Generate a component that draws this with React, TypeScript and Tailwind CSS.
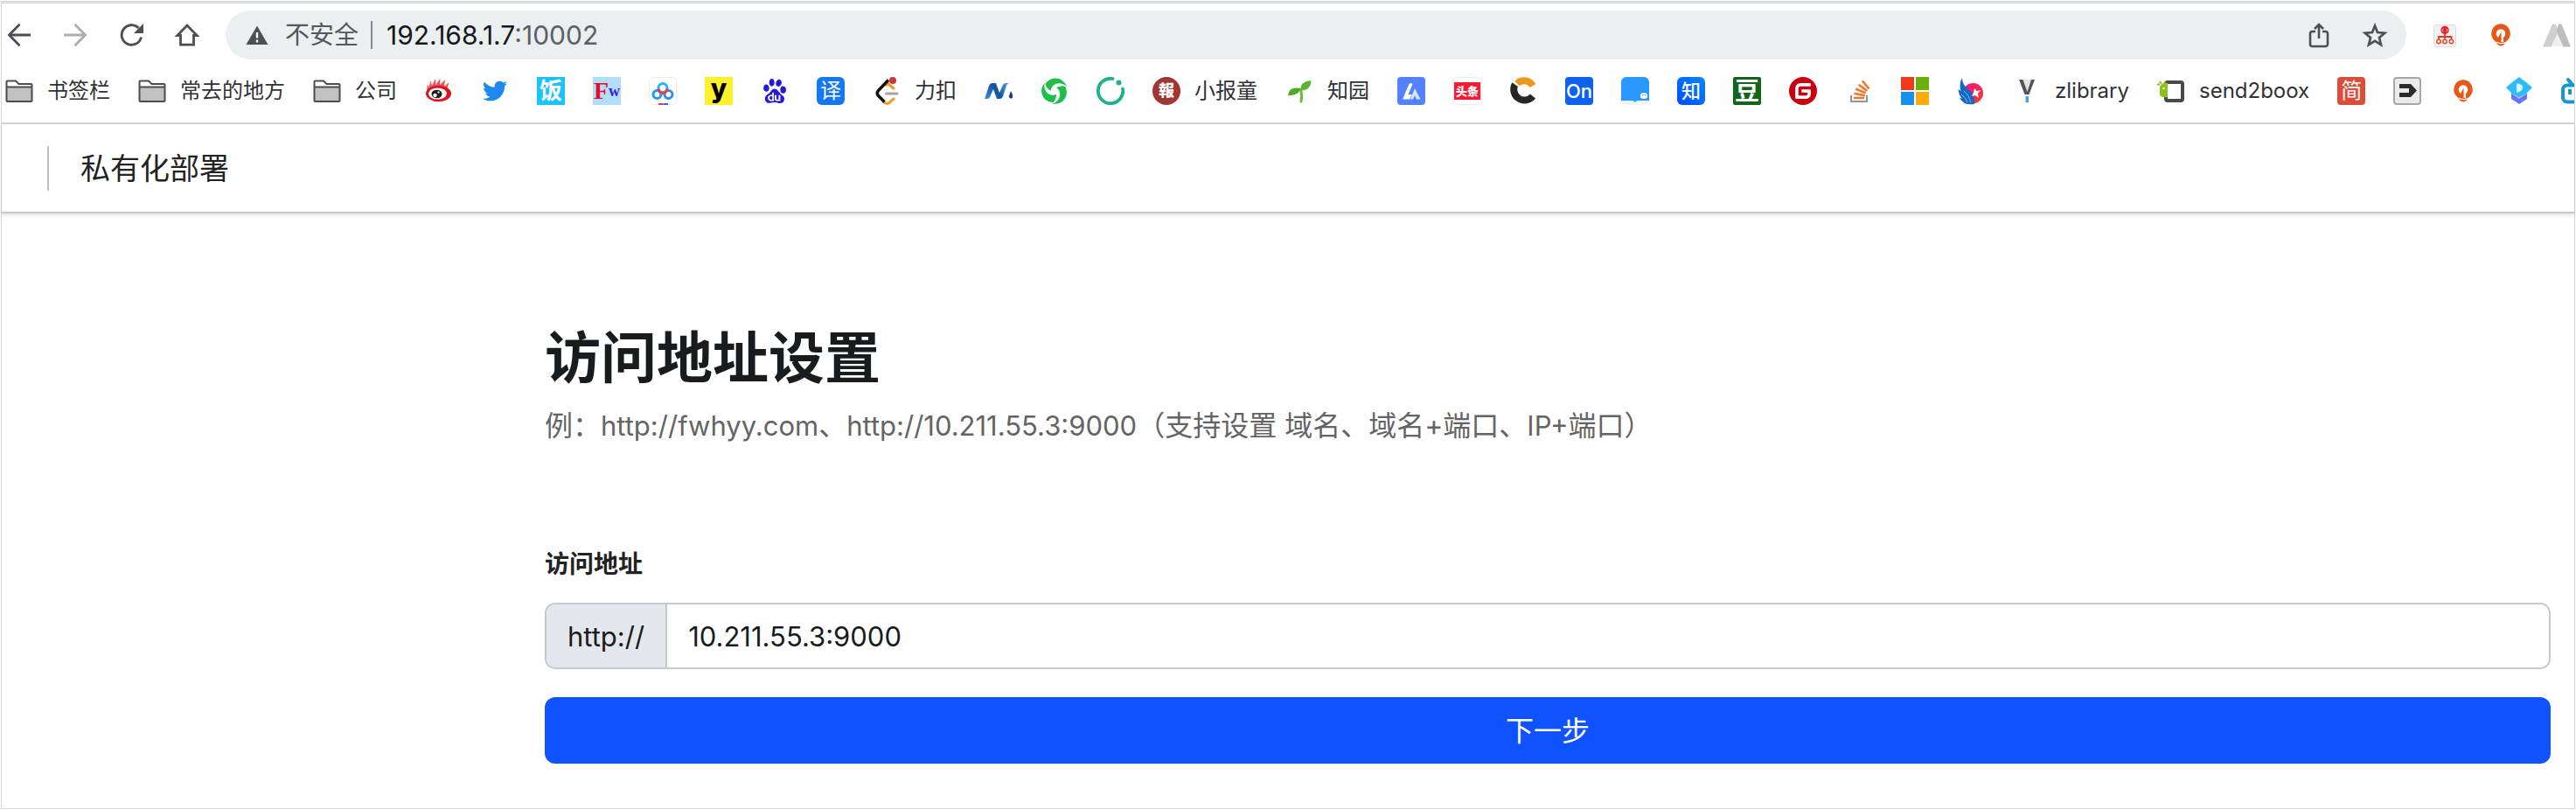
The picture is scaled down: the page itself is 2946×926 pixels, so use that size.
import type { ReactNode } from "react";
import { FaTwitter } from "react-icons/fa";
import { SiBaidu, SiGitee } from "react-icons/si";

function Svg({ children }: { children: ReactNode }) {
  return (
    <svg viewBox="0 0 32 32" className="size-8 shrink-0" fill="none" aria-hidden="true">
      {children}
    </svg>
  );
}

function Tile({ className, children }: { className: string; children: ReactNode }) {
  return (
    <span className={"flex size-8 shrink-0 items-center justify-center whitespace-nowrap leading-8 " + className}>
      {children}
    </span>
  );
}

const Folder = () => (
  <Svg>
    <path d="M1.5 27V5.500a1 1 0 0 1 1-1h9.500l3.500 3.500h14a1 1 0 0 1 1 1v18a1 1 0 0 1-1 1h-27a1 1 0 0 1-1-1z" fill="#fff" />
    <path d="M1.5 12h29v15a1 1 0 0 1-1 1h-27a1 1 0 0 1-1-1z" fill="#c2c2c2" />
    <path d="M1.5 11.500h29M1.500 27V5.500a1 1 0 0 1 1-1h9.500l3.500 3.500h14a1 1 0 0 1 1 1v18a1 1 0 0 1-1 1h-27a1 1 0 0 1-1-1z" stroke="#4a4c4f" strokeWidth="2" />
  </Svg>
);

const Weibo = () => (
  <Svg>
    <path d="M2 16 3 8l1.500 4L6.500 4l1.500 6 4-8 .5 7L17.500 1.500 17 9l6-6-1 8 5.500-5-2 7 3.500 4z" fill="#f1505a" />
    <ellipse cx="15.500" cy="19" rx="14.500" ry="9.200" fill="#e0101f" />
    <ellipse cx="14.500" cy="19" rx="10.500" ry="6.600" fill="#fff" />
    <ellipse cx="13.500" cy="19.500" rx="6" ry="4.800" fill="#1d1d1d" />
    <circle cx="11.500" cy="21" r="2.200" fill="#fff" />
    <circle cx="15.500" cy="17.500" r="1.200" fill="#ddd" />
  </Svg>
);

const NetDisk = () => (
  <Svg>
    <rect x=".5" y=".5" width="31" height="31" rx="5" fill="#fff" stroke="#ececec" />
    <circle cx="9.500" cy="20" r="4.500" stroke="#1e9bf0" strokeWidth="3" />
    <circle cx="22.500" cy="20" r="4.500" stroke="#2f8df5" strokeWidth="3" />
    <circle cx="16" cy="12.500" r="5" stroke="#25b5f5" strokeWidth="3" />
    <path d="M11 13.500a5 5 0 0 0 10 0" stroke="#ee3a53" strokeWidth="3" />
    <path d="M11 31h5.500" stroke="#f0364c" strokeWidth="2" />
    <path d="M16.500 31H22" stroke="#1f72f2" strokeWidth="2" />
  </Svg>
);

const LeetCode = () => (
  <Svg>
    <path d="m15.500 9 2-1.500L24 13M12.500 28.500q4 4 7.500 0l4-3.500" stroke="#f09a25" strokeWidth="3" strokeLinecap="round" />
    <path d="M18 3.500 6.500 15.500q-2.500 3 0 6l7 7" stroke="#111" strokeWidth="3.400" />
    <path d="M15.500 19H28" stroke="#aaa5a3" strokeWidth="3" strokeLinecap="round" />
    <circle cx="23" cy="4" r="4" fill="#c8393c" />
  </Svg>
);

const Wave = () => (
  <Svg>
    <defs>
      <linearGradient id="wave" x1="0" y1="24" x2="28" y2="7" gradientUnits="userSpaceOnUse">
        <stop stopColor="#3f8ce8" />
        <stop offset=".5" stopColor="#12539c" />
        <stop offset="1" stopColor="#5aa7f5" />
      </linearGradient>
    </defs>
    <path d="M0 25 5 10q1-3 4-3h4l4 11 4-9q1-2 3-2h4q-2 1-3 3l-4 12q-1 3-3 3h-4L10 14 6 23q-1 2-3 2z" fill="url(#wave)" />
    <path d="M30 16q4 7 1 8.500-3.500.5-3-3z" fill="#123f80" />
  </Svg>
);

const Swirl = () => (
  <Svg>
    <g fill="#1fbe4b">
      <path d="M5.500 8C11-1 25-1.500 30 11 23 4.500 13 7 11.500 16 8.500 13.500 6 11.500 5.500 8z" />
      <path d="M5.500 8C11-1 25-1.500 30 11 23 4.500 13 7 11.500 16 8.500 13.500 6 11.500 5.500 8z" transform="rotate(120 16 16)" />
      <path d="M5.500 8C11-1 25-1.500 30 11 23 4.500 13 7 11.500 16 8.500 13.500 6 11.500 5.500 8z" transform="rotate(240 16 16)" />
    </g>
  </Svg>
);

const OpenRing = () => (
  <Svg>
    <path d="M18.500 2A14.200 14.200 0 1 0 30 13.500" stroke="#1fb28a" strokeWidth="3.800" strokeLinecap="round" />
    <circle cx="25.500" cy="6.500" r="3" fill="#1fb28a" />
  </Svg>
);

const Seedling = () => (
  <Svg>
    <path d="M18 28q1.500-7-.5-13.500" stroke="#6cbf35" strokeWidth="3" strokeLinecap="round" />
    <path d="M3 21q1-10.500 14.500-8-3 9-14.500 8z" fill="#4fa829" />
    <path d="M17.500 15.500Q16.500 5 29.500 4q-.5 11.500-12 11.500z" fill="#5cb531" />
  </Svg>
);

const Peak = () => (
  <Svg>
    <rect width="32" height="32" rx="4" fill="#5282ff" />
    <path d="M6 25.500 13.500 8q1.500-2 4 0L12.500 20H17l-3 5.500z" fill="#fff" />
    <path d="m15 25.500 5-12.500 6.500 12.500H22L20 21l-2 4.500z" fill="#dbe5ff" />
  </Svg>
);

const SplitC = () => (
  <Svg>
    <path d="M8 6.500A11.500 11.500 0 1 0 27 22" stroke="#262626" strokeWidth="8" />
    <path d="m0 4 6-5 7 10-3 2z" fill="#fff" />
    <path d="M9 7.500A11.500 11.500 0 0 1 27 10" stroke="#f0961e" strokeWidth="8" />
  </Svg>
);

const Chat = () => (
  <Svg>
    <rect width="32" height="32" rx="6" fill="#edf5ff" />
    <path d="M0 27V6a6 6 0 0 1 6-6h20a6 6 0 0 1 6 6v21H18l-2 2-2-2z" fill="#2b98ff" />
    <ellipse cx="26" cy="21.500" rx="4.200" ry="3.600" fill="#fff" />
    <circle cx="24.500" cy="20.500" r=".8" fill="#2b98ff" />
    <circle cx="27.500" cy="20.500" r=".8" fill="#2b98ff" />
  </Svg>
);

const Stack = () => (
  <Svg>
    <path d="M7 21v7h18v-7" stroke="#8d979e" strokeWidth="2.200" />
    <path d="M10 24h12M10.500 18.800l12.200 2.400M12.300 13.500l11.200 4.900M15.700 8.800l9.500 7.100M20 4.500l7.500 9" stroke="#f0762a" strokeWidth="2.600" />
  </Svg>
);

const Windows = () => (
  <Svg>
    <path d="M0 0h15v15H0z" fill="#f0391b" />
    <path d="M17 0h15v15H17z" fill="#6bb007" />
    <path d="M0 17h15v15H0z" fill="#1592f0" />
    <path d="M17 17h15v15H17z" fill="#fdab0c" />
  </Svg>
);

const Wing = () => (
  <Svg>
    <defs>
      <linearGradient id="sun" x1="12" y1="6" x2="28" y2="30" gradientUnits="userSpaceOnUse">
        <stop stopColor="#f5127c" />
        <stop offset="1" stopColor="#ff3a20" />
      </linearGradient>
    </defs>
    <circle cx="18.500" cy="18.500" r="11.500" fill="url(#sun)" />
    <path d="M6 1q0 8 7 13 8 6 7 17Q8 33 3 24l3 .5Q2 21 1.500 14l3 2Q2 7 6 1z" fill="#1967c4" />
    <path d="M8 16q6 5 8 13M5 20q5 3 7 9" stroke="#7fb6ee" strokeWidth="1" />
    <path d="m20 13 2.500 3 5-1-3.500 4 1 5-4-3-4 1 2-4z" fill="#fff" />
  </Svg>
);

const Vee = () => (
  <Svg>
    <path d="M9 3h15l-6.500 16h-3z" fill="#e4e4e4" />
    <path d="M7 3h4.500l5 14 4.500-14H25l-6.500 17h-5z" fill="#555" />
    <path d="M14.500 22h3.500v7h-3.500z" fill="#44a5cf" />
  </Svg>
);

const Boox = () => (
  <Svg>
    <rect x="10" y="6" width="19" height="21" rx="2" fill="#fff" stroke="#4d4948" strokeWidth="4" />
    <path d="M3 11q4-6 9-4v16q-6 1-9-2z" fill="#8bc31c" />
    <path d="m0 9 3-1M3 5l2 3" stroke="#8bc31c" strokeWidth="2" />
    <circle cx="7.500" cy="13" r="1.200" fill="#fff" />
  </Svg>
);

const Arrow = () => (
  <Svg>
    <rect x="1" y="1" width="30" height="30" rx="3" fill="#ebebeb" stroke="#a8a8a8" strokeWidth="2" />
    <path d="M7 8h13l7 7.500-7 7.500H7v-5h11v-5H7z" fill="#2b2b2b" />
  </Svg>
);

const Bulb = () => (
  <Svg>
    <path d="M10 23.500A10.800 11 0 1 1 22 23.500l-2 3q-4 4-8 0z" fill="#e6581a" />
    <circle cx="16" cy="14.500" r="5.200" fill="#fff" />
    <path d="M16.500 17h2.500v7h-2.500z" fill="#fff" />
    <path d="m16.500 12.500-5 9h5z" fill="#e6581a" />
    <path d="M11 24q5 3 10 .5" stroke="#fff" strokeWidth="1.200" />
  </Svg>
);

const Gem = () => (
  <Svg>
    <path d="M7 17v8l9 6 9-6v-8z" fill="#6673fb" />
    <path d="m7 18 9 6 9-6" stroke="#b6c9ff" strokeWidth="1.500" />
    <path d="m16 0 8 6 7 6-7 7-8 4-8-4-7-7 7-6z" fill="#2dbcfa" />
    <path d="M13 7.500q7 0 7 4.500t-7 6z" fill="#d9f4ff" />
  </Svg>
);

const Television = () => (
  <Svg>
    <rect x="2" y="9.500" width="28" height="19" rx="5" stroke="#1597d3" strokeWidth="4" />
    <path d="m8 3 5 6M24 3l-5 6" stroke="#1597d3" strokeWidth="4" strokeLinecap="round" />
    <path d="M10 14v6M22 14v6" stroke="#1597d3" strokeWidth="4" />
  </Svg>
);

const SiteTree = () => (
  <Svg>
    <rect x="3.500" y="4.500" width="25" height="25" rx="3" fill="#f2f2f2" stroke="#dcdcdc" />
    <circle cx="16" cy="10.500" r="4.700" fill="#e8202a" />
    <path d="m14.500 8.800-1.800 1.700 1.800 1.700M17.500 8.800l1.800 1.700-1.800 1.700" stroke="#fff" strokeWidth=".9" />
    <path d="M16 14v8M9 22v-4h14.500v4" stroke="#e8382a" strokeWidth="1.800" />
    <g fill="#fff" stroke="#f04a26" strokeWidth="1.600">
      <circle cx="9" cy="23.500" r="2.200" />
      <circle cx="16" cy="23.500" r="2.200" />
      <circle cx="23.500" cy="23.500" r="2.200" />
    </g>
  </Svg>
);

const Mountains = () => (
  <Svg>
    <path d="m16.500 11 8 18h-17z" fill="#efefef" />
    <path d="m0 29.500 11-26h3.500l3.500 8-8.500 18z" fill="#cfcfcf" />
    <path d="M32 29.500 21.500 3.500H18l-2.500 8 8 18z" fill="#bdbdbd" />
  </Svg>
);

type Bookmark = { name: string; text?: string; icon: ReactNode };

const bookmarks: Bookmark[] = [
  { name: "书签栏", text: "书签栏", icon: <Folder /> },
  { name: "常去的地方", text: "常去的地方", icon: <Folder /> },
  { name: "公司", text: "公司", icon: <Folder /> },
  { name: "微博", icon: <Weibo /> },
  { name: "Twitter", icon: <Tile className="text-[28px] text-[#1d88ee]"><FaTwitter /></Tile> },
  { name: "饭", icon: <Tile className="bg-[#1ac3ff] text-[26px] font-bold text-white">饭</Tile> },
  {
    name: "Fw",
    icon: (
      <Tile className="bg-[#b2dff8] font-['Liberation_Serif'] text-[28px] font-bold text-[#f0062a]">
        F<span className="text-[18px] text-[#3a15f5]">w</span>
      </Tile>
    ),
  },
  { name: "网盘", icon: <NetDisk /> },
  { name: "y", icon: <Tile className="bg-[#fff12b] pb-1.5 text-[30px] font-extrabold text-black">y</Tile> },
  { name: "百度", icon: <Tile className="text-[28px] text-[#2319dc]"><SiBaidu /></Tile> },
  { name: "翻译", icon: <Tile className="rounded-md bg-[#1677f2] text-2xl text-white">译</Tile> },
  { name: "力扣", text: "力扣", icon: <LeetCode /> },
  { name: "N", icon: <Wave /> },
  { name: "Swirl", icon: <Swirl /> },
  { name: "Ring", icon: <OpenRing /> },
  { name: "小报童", text: "小报童", icon: <Tile className="rounded-full bg-[#a03732] text-lg font-black text-white">報</Tile> },
  { name: "知园", text: "知园", icon: <Seedling /> },
  { name: "Peak", icon: <Peak /> },
  {
    name: "头条",
    icon: (
      <Tile className="rounded-md border border-[#eeeeee] bg-white">
        <span className="h-5 w-8 bg-[#fb1a32] text-center text-[13px] leading-5 font-black text-white">头条</span>
      </Tile>
    ),
  },
  { name: "C", icon: <SplitC /> },
  { name: "On", icon: <Tile className="rounded bg-[#0f62eb] text-[22px] font-medium text-white">On</Tile> },
  { name: "Chat", icon: <Chat /> },
  { name: "知乎", icon: <Tile className="rounded-md bg-linear-to-tr from-[#0647ff] to-[#0f86ff] text-[22px] font-medium text-white">知</Tile> },
  { name: "豆瓣", icon: <Tile className="rounded-xs bg-[#11661a] text-[28px] font-bold text-white">豆</Tile> },
  { name: "Gitee", icon: <Tile className="text-[32px] text-[#c9000f]"><SiGitee /></Tile> },
  { name: "Stack Overflow", icon: <Stack /> },
  { name: "Microsoft", icon: <Windows /> },
  { name: "Wing", icon: <Wing /> },
  { name: "zlibrary", text: "zlibrary", icon: <Vee /> },
  { name: "send2boox", text: "send2boox", icon: <Boox /> },
  { name: "简书", icon: <Tile className="rounded bg-[#dd4b39] text-2xl text-white">简</Tile> },
  { name: "Arrow", icon: <Arrow /> },
  { name: "Bulb", icon: <Bulb /> },
  { name: "Gem", icon: <Gem /> },
  { name: "哔哩哔哩", icon: <Television /> },
];

function Toolbar() {
  return (
    <div className="flex items-center gap-7 px-1 pt-2 text-[#4c4f54]">
      <div className="flex gap-8">
        <button type="button" aria-label="后退">
          <Svg>
            <path d="M29 16H4.500M16.500 3.800 4.500 16l12 12.200" stroke="currentColor" strokeWidth="2.800" />
          </Svg>
        </button>
        <button type="button" aria-label="前进" className="text-[#acaeb1]">
          <Svg>
            <path d="M3 16h24.500M15.500 3.800 27.500 16l-12 12.200" stroke="currentColor" strokeWidth="2.800" />
          </Svg>
        </button>
        <button type="button" aria-label="重新加载">
          <Svg>
            <path d="M27.500 18.500A11.300 11.300 0 1 1 24.500 8" stroke="currentColor" strokeWidth="2.900" />
            <path d="M30 3v11H19z" fill="currentColor" />
          </Svg>
        </button>
        <button type="button" aria-label="主页">
          <Svg>
            <path d="M16 5 4.800 16.500h3.700v10.700h15V16.500h3.700z" stroke="currentColor" strokeWidth="2.800" />
          </Svg>
        </button>
      </div>

      <div className="flex h-14 min-w-0 flex-1 items-center rounded-full bg-[#ebeff0] px-5">
        <Svg>
          <path d="M16 5.500 28.500 27h-25z" fill="currentColor" />
          <path d="M16 13v6.500M16 21.500v3" stroke="#fff" strokeWidth="2.400" />
        </Svg>
        <span className="ml-4 text-[28px] leading-9 text-[#54575b]">不安全</span>
        <span className="ml-3.5 h-8 w-0.5 bg-[#85888c]" />
        <span className="ml-4 flex-1 text-[30px] leading-9 text-[#5c6063]">
          <span className="text-[#17181a]">192.168.1.7</span>:10002
        </span>
        <div className="flex gap-8">
          <button type="button" aria-label="分享">
            <Svg>
              <path d="M12 12H8.500A2.500 2.500 0 0 0 6 14.500v12A2.500 2.500 0 0 0 8.500 29h15a2.500 2.500 0 0 0 2.500-2.500v-12a2.500 2.500 0 0 0-2.500-2.500H20M16 20V4.500M11 9l5-5 5 5" stroke="currentColor" strokeWidth="2.600" />
            </Svg>
          </button>
          <button type="button" aria-label="添加书签">
            <Svg>
              <path d="m16 5.500 3 7.500 8.300.7-6.300 5.400 2 8-7-4.300-7 4.300 2-8-6.300-5.400L13 13z" stroke="currentColor" strokeWidth="2.700" />
            </Svg>
          </button>
        </div>
      </div>

      <div className="flex gap-8">
        <button type="button" aria-label="站点结构"><SiteTree /></button>
        <button type="button" aria-label="灯泡"><Bulb /></button>
        <button type="button" aria-label="山峰"><Mountains /></button>
      </div>
    </div>
  );
}

function Latin({ children }: { children: ReactNode }) {
  return <span className="text-[31px]">{children}</span>;
}

export default function App() {
  return (
    <div className="bg-white p-px font-['Inter','Noto_Sans_CJK_SC',sans-serif]">
      <div className="border border-t-[3px] border-[#d6d6d6] border-t-[#d8dde1]">
        <Toolbar />

        <nav aria-label="书签" className="flex items-center gap-8 overflow-hidden border-b-2 border-[#d4d4d4] py-5 pl-1">
          {bookmarks.map((b) => (
            <a key={b.name} href="#" aria-label={b.name} className="flex h-8 shrink-0 items-center gap-4 text-2xl leading-8 whitespace-nowrap text-[#2f3236]">
              {b.icon}
              {b.text && <span>{b.text}</span>}
            </a>
          ))}
        </nav>

        <header className="flex h-[102px] items-center border-b-2 border-[#c8c8c8] pl-[52px] shadow-[0_2px_4px_rgba(0,0,0,0.12)]">
          <span className="h-[51px] w-0.5 bg-[#bdbdbd]" />
          <span className="pt-0.5 pl-9 text-[34px] leading-12 text-[#222222]">私有化部署</span>
        </header>

        <main className="pt-[125px] pr-[27px] pb-[51px] pl-[621px]">
          <h1 className="text-[64px] leading-[80px] font-bold text-[#181c1f]">访问地址设置</h1>
          <p className="mt-3.5 text-[32px] leading-12 text-[#646464]">
            例：<Latin>http://fwhyy.com</Latin>、<Latin>http://10.211.55.3:9000</Latin>（支持设置 域名、域名+端口、<Latin>IP+</Latin>端口）
          </p>
          <form className="mt-[114px]" onSubmit={(e) => e.preventDefault()}>
            <label htmlFor="address" className="block text-[28px] leading-10 font-bold text-[#222222]">
              访问地址
            </label>
            <div className="mt-6 flex h-[76px] overflow-hidden rounded-xl border-2 border-[#c3c9d3] text-[31px] text-[#181c1f]">
              <span className="flex items-center border-r-2 border-[#c3c9d3] bg-[#e4e7ec] px-6 pt-0.5">http://</span>
              <input id="address" type="text" defaultValue="10.211.55.3:9000" className="min-w-0 flex-1 bg-white px-6 pt-0.5 outline-none" />
            </div>
            <button type="submit" className="mt-8 block h-[76px] w-full rounded-xl bg-[#0f52ff] pt-0.5 text-[32px] text-white">
              下一步
            </button>
          </form>
        </main>
      </div>
    </div>
  );
}
